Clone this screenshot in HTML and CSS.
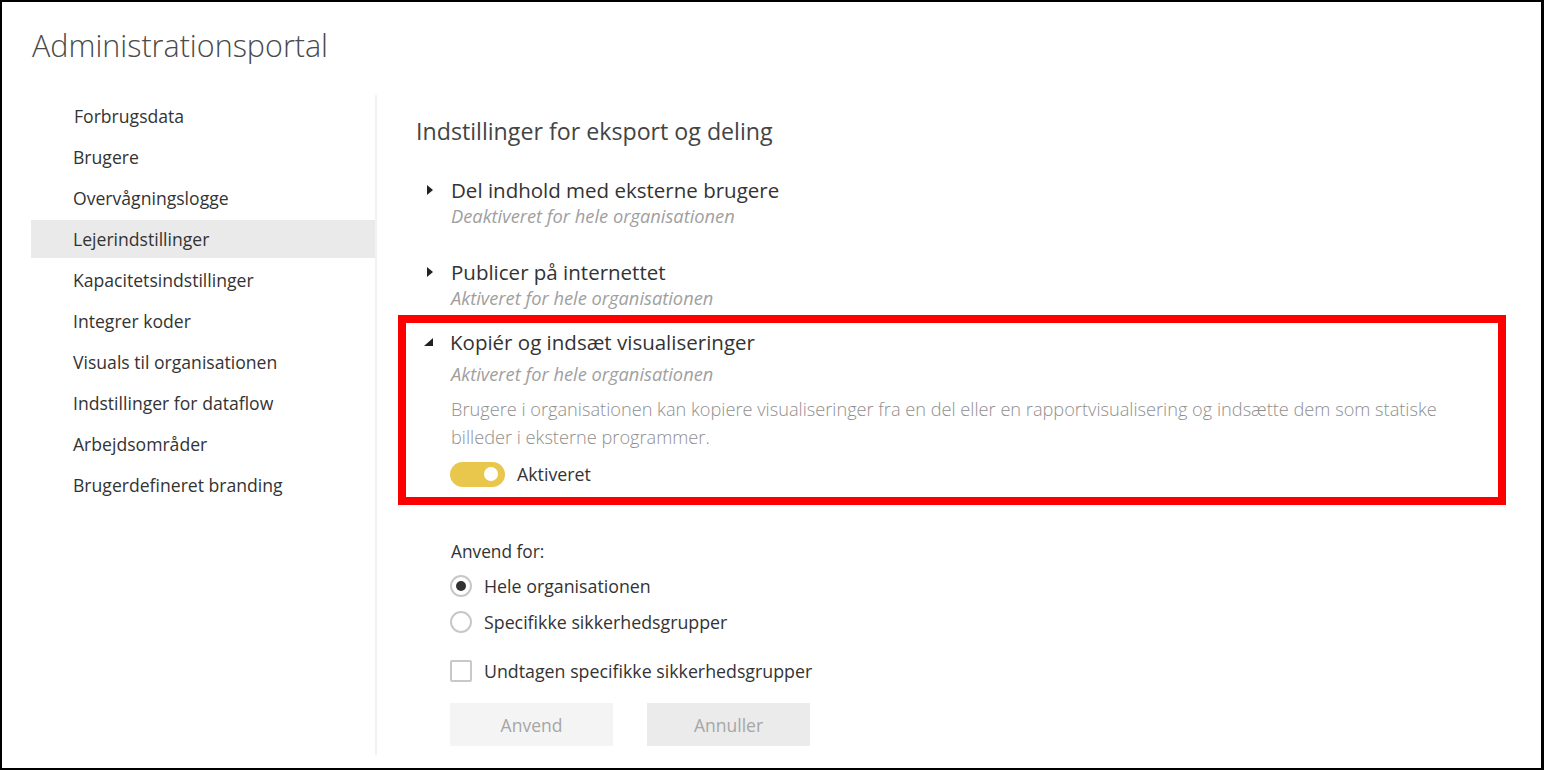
FILE: index.html
```html
<!DOCTYPE html>
<html lang="da">
<head>
<meta charset="utf-8">
<title>Administrationsportal</title>
<link rel="stylesheet" href="styles.css">
</head>
<body>
<div class="frame">
  <h1 class="title">Administrationsportal</h1>
  <div class="main">
    <nav class="sidebar">
      <div class="nav-item first">Forbrugsdata</div>
      <div class="nav-item">Brugere</div>
      <div class="nav-item">Overvågningslogge</div>
      <div class="nav-item selected">Lejerindstillinger</div>
      <div class="nav-item">Kapacitetsindstillinger</div>
      <div class="nav-item">Integrer koder</div>
      <div class="nav-item">Visuals til organisationen</div>
      <div class="nav-item">Indstillinger for dataflow</div>
      <div class="nav-item">Arbejdsområder</div>
      <div class="nav-item">Brugerdefineret branding</div>
    </nav>
    <section class="content">
      <h2 class="heading">Indstillinger for eksport og deling</h2>

      <div class="setting">
        <div class="setting-title">
          <svg class="caret" width="8" height="12" viewBox="0 0 8 12"><path d="M1 1 L7 6 L1 11 Z" fill="#222"/></svg>
          <span>Del indhold med eksterne brugere</span>
        </div>
        <div class="setting-status">Deaktiveret for hele organisationen</div>
      </div>

      <div class="setting">
        <div class="setting-title">
          <svg class="caret" width="8" height="12" viewBox="0 0 8 12"><path d="M1 1 L7 6 L1 11 Z" fill="#222"/></svg>
          <span>Publicer på internettet</span>
        </div>
        <div class="setting-status">Aktiveret for hele organisationen</div>
      </div>

      <div class="setting expanded">
        <div class="setting-title">
          <svg class="caret-open" width="12" height="12" viewBox="0 0 12 12"><path d="M11 2 L11 10 L2 10 Z" fill="#222"/></svg>
          <span>Kopiér og indsæt visualiseringer</span>
        </div>
        <div class="setting-status">Aktiveret for hele organisationen</div>
        <p class="desc">Brugere i organisationen kan kopiere visualiseringer fra en del eller en rapportvisualisering og indsætte dem som statiske billeder i eksterne programmer.</p>
        <div class="toggle-row">
          <span class="toggle"><span class="knob"></span></span>
          <span class="toggle-label">Aktiveret</span>
        </div>
      </div>

      <div class="apply">
        <div class="apply-label">Anvend for:</div>
        <div class="option first-option">
          <span class="radio checked"></span>
          <span>Hele organisationen</span>
        </div>
        <div class="option">
          <span class="radio"></span>
          <span>Specifikke sikkerhedsgrupper</span>
        </div>
        <div class="option check-option">
          <span class="checkbox"></span>
          <span>Undtagen specifikke sikkerhedsgrupper</span>
        </div>
        <div class="buttons">
          <button class="btn btn-apply">Anvend</button>
          <button class="btn btn-cancel">Annuller</button>
        </div>
      </div>
    </section>
  </div>
</div>
</body>
</html>
```

FILE: styles.css
```css
* { box-sizing: border-box; }
html, body { margin: 0; padding: 0; background: #fff; }
body {
  font-family: "Open Sans", "Noto Sans", "Liberation Sans", sans-serif;
  color: #333;
}
.frame {
  width: 1544px;
  height: 770px;
  border: 2px solid #000;
  border-right-width: 3px;
  overflow: hidden;
}
.title {
  margin: 0;
  padding: 24px 0 0 30px;
  height: 93px;
  font-size: 30.5px;
  font-weight: 300;
  color: #4a4a4a;
  line-height: 38px;
}
.main {
  display: flex;
}
.sidebar {
  width: 346px;
  margin-left: 29px;
  padding-top: 2px;
  height: 660px;
  border-right: 2px solid #f2f2f2;
}
.nav-item {
  height: 38px;
  margin-bottom: 3px;
  line-height: 38px;
  padding-left: 42px;
  font-size: 17.6px;
  color: #333;
}
.nav-item.first { padding-left: 43px; }
.nav-item.selected { background: #eaeaea; }
.content {
  padding-left: 39px;
  flex: 1;
}
.heading {
  margin: 21px 0 0 0;
  font-size: 23.2px;
  font-weight: 400;
  color: #444;
  line-height: 30px;
}
.setting {
  margin-left: 10px;
  margin-top: 30px;
}
.heading + .setting { margin-top: 31px; }
.setting-title {
  display: flex;
  align-items: center;
  height: 26px;
  font-size: 20.5px;
  color: #333;
  line-height: 26px;
}
.caret { margin-right: 17px; flex: none; }
.caret-open { margin-right: 16px; margin-left: -1px; flex: none; }
.setting-status {
  padding-left: 25px;
  font-size: 18.3px;
  font-style: italic;
  color: #a0a0a0;
  line-height: 26px;
  height: 26px;
}
.setting.expanded {
  margin-top: 4px;
  margin-left: -18px;
  width: 1108px;
  border: 8px solid #ff0000;
  padding: 6px 0 10px 17px;
}
.expanded .setting-status {
  margin-top: 6px;
  padding-left: 28px;
}
.desc {
  margin: 8px 0 0 0;
  padding-left: 28px;
  padding-right: 30px;
  font-size: 18.2px;
  font-weight: 300;
  color: #8f8f8f;
  line-height: 28px;
}
.toggle-row {
  display: flex;
  align-items: center;
  padding-left: 27px;
  margin-top: 10px;
  height: 26px;
}
.toggle {
  width: 55px;
  height: 25px;
  border-radius: 13px;
  background: #e9c64c;
  position: relative;
  margin-right: 12px;
  flex: none;
}
.knob {
  position: absolute;
  right: 7px;
  top: 5.5px;
  width: 14px;
  height: 14px;
  border-radius: 50%;
  background: #fff;
}
.toggle-label {
  font-size: 17.8px;
  color: #333;
}
.apply {
  padding-left: 35px;
  padding-top: 35px;
}
.apply-label {
  font-size: 17.3px;
  color: #333;
  line-height: 24px;
  height: 24px;
}
.option {
  display: flex;
  align-items: center;
  height: 36px;
  font-size: 17.8px;
  color: #333;
}
.first-option { margin-top: 4px; }
.radio {
  width: 22px;
  height: 22px;
  border-radius: 50%;
  border: 2px solid #c8c8c8;
  margin-left: -1px;
  margin-right: 12px;
  position: relative;
  flex: none;
}
.radio.checked::after {
  content: "";
  position: absolute;
  left: 4px;
  top: 4px;
  width: 10px;
  height: 10px;
  border-radius: 50%;
  background: #333;
}
.check-option { margin-top: 13px; }
.checkbox {
  width: 22px;
  height: 22px;
  border: 2px solid #c8c8c8;
  border-radius: 2px;
  margin-left: -1px;
  margin-right: 12px;
  flex: none;
}
.buttons {
  display: flex;
  gap: 34px;
  margin-top: 14px;
  margin-left: -1px;
}
.btn {
  width: 163px;
  height: 43px;
  border: none;
  font-family: inherit;
  font-size: 17.5px;
  color: #a6a6a6;
  padding: 0;
}
.btn-apply { background: #f4f4f4; }
.btn-cancel { background: #ebebeb; }
```
